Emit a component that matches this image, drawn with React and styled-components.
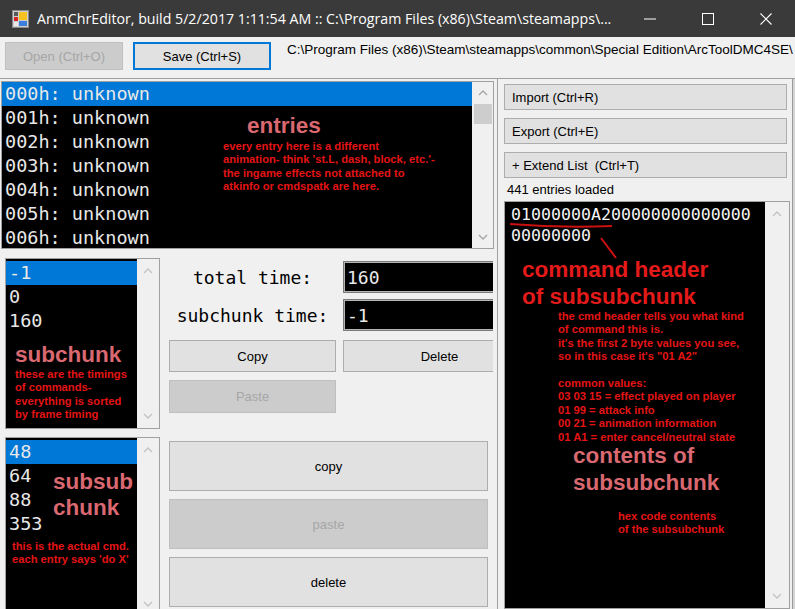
import React from 'react';
import styled, { createGlobalStyle } from 'styled-components';

const GlobalStyle = createGlobalStyle`
  * { box-sizing: border-box; }
  html, body { margin: 0; padding: 0; background: #f0f0f0; }
  body { font-family: "Liberation Sans", Arial, sans-serif; overflow: hidden; }
`;

const Window = styled.div`
  width: 795px;
  height: 609px;
  display: flex;
  flex-direction: column;
  overflow: hidden;
  background: #f0f0f0;
`;

const TitleBar = styled.div`
  height: 37px;
  flex: none;
  display: flex;
  align-items: center;
  padding-left: 12px;
  background: #3a3a3a;
  color: #ffffff;
`;

const TitleText = styled.div`
  flex: 1;
  margin-left: 8px;
  font-family: "Open Sans", "Noto Sans", sans-serif;
  font-size: 14.2px;
  white-space: nowrap;
  overflow: hidden;
`;

const CaptionButton = styled.div`
  width: 58px;
  height: 37px;
  display: flex;
  align-items: center;
  justify-content: center;
`;

const Toolbar = styled.div`
  height: 41px;
  flex: none;
  display: flex;
  align-items: flex-start;
  gap: 10px;
  padding: 5px 0 0 5px;
  overflow: hidden;
`;

const Button = styled.button`
  flex: none;
  width: ${p => p.$w}px;
  height: ${p => p.$h}px;
  padding: 0 0 0 ${p => (p.$left ? 7 : 0)}px;
  text-align: ${p => (p.$left ? 'left' : 'center')};
  white-space: pre;
  font-family: "Liberation Sans", Arial, sans-serif;
  font-size: 13px;
  color: #000;
  background: #e1e1e1;
  border: ${p => (p.$focused ? '2px solid #0078d7' : '1px solid #adadad')};
  border-radius: 0;

  &:disabled {
    background: #cccccc;
    border-color: #bfbfbf;
    color: #a6a6a6;
  }
`;

const PathLabel = styled.div`
  flex: none;
  margin-left: 6px;
  font-size: 13.5px;
  line-height: 16px;
  white-space: nowrap;
  color: #000;
`;

const Main = styled.div`
  flex: 1;
  min-height: 0;
  display: flex;
  border-top: 1px solid #a0a0a0;
  background: #d4d4d4;
`;

const LeftPanel = styled.div`
  width: 498px;
  flex: none;
  display: flex;
  flex-direction: column;
  padding-top: 2px;
  border-right: 1px solid #a0a0a0;
  background: #f0f0f0;
  overflow: hidden;
`;

const ListBox = styled.div`
  flex: none;
  display: flex;
  width: ${p => p.$w}px;
  height: ${p => p.$h}px;
  margin-left: ${p => p.$ml || 0}px;
  border: 1px solid #a0a0a0;
  background: #f0f0f0;
`;

const ListArea = styled.div`
  position: relative;
  flex: 1;
  overflow: hidden;
  background: #000;
  padding-top: ${p => p.$pt || 0}px;
`;

const ListItem = styled.div`
  height: 24px;
  line-height: 24px;
  padding-left: 3px;
  font-family: "DejaVu Sans Mono", "Liberation Mono", monospace;
  font-size: 18.5px;
  white-space: pre;
  color: #e8e8e8;
  background: ${p => (p.$selected ? '#0078d7' : 'transparent')};
`;

const ScrollBar = styled.div`
  flex: none;
  width: ${p => p.$w}px;
  display: flex;
  flex-direction: column;
  align-items: center;
  background: #f0f0f0;
`;

const ArrowCell = styled.div`
  height: ${p => p.$h || 24}px;
  width: 100%;
  display: flex;
  align-items: center;
  justify-content: center;
`;

const Thumb = styled.div`
  width: 18px;
  height: 20px;
  background: #cdcdcd;
`;

const Spacer = styled.div`
  flex: 1;
`;

const LowerGrid = styled.div`
  width: 493px;
  margin-top: 9px;
  padding-left: 5px;
  display: grid;
  grid-template-columns: 155px 1fr;
  grid-template-rows: 171px 180px;
  column-gap: 9px;
  row-gap: 8px;
  overflow: hidden;
`;

const Controls = styled.div`
  padding-top: 3px;
  display: flex;
  flex-direction: column;
`;

const FieldGrid = styled.div`
  display: grid;
  grid-template-columns: 167px 193px;
  grid-auto-rows: 32px;
  column-gap: 7px;
  row-gap: 6px;
`;

const FieldLabel = styled.div`
  display: flex;
  align-items: center;
  justify-content: center;
  font-family: "DejaVu Sans Mono", "Liberation Mono", monospace;
  font-size: 18px;
  white-space: pre;
  color: #000;
`;

const FieldInput = styled.div`
  display: flex;
  align-items: center;
  padding-left: 3px;
  background: #000;
  border: 1px solid #7a7a7a;
  box-shadow: inset 0 0 0 1px #b4b4b4;
  font-family: "DejaVu Sans Mono", "Liberation Mono", monospace;
  font-size: 18px;
  color: #e8e8e8;
`;

const ButtonGrid = styled.div`
  margin-top: 9px;
  display: grid;
  grid-template-columns: 167px 193px;
  grid-template-rows: 32px 33px;
  column-gap: 7px;
  row-gap: 8px;
`;

const BigButtons = styled.div`
  padding-top: 4px;
  display: flex;
  flex-direction: column;
  gap: 8px;
`;

const RightPanel = styled.div`
  width: 295px;
  flex: none;
  display: flex;
  flex-direction: column;
  padding: 5px 0 0 6px;
  border-right: 1px solid #9a9a9a;
  background: #f0f0f0;
`;

const ButtonStack = styled.div`
  display: flex;
  flex-direction: column;
  gap: 8px;
`;

const Status = styled.div`
  height: 23px;
  line-height: 23px;
  padding-left: 3px;
  font-size: 13px;
  color: #000;
`;

const HexBox = styled.div`
  flex: 1;
  width: 286px;
  display: flex;
  border: 1px solid #a0a0a0;
  background: #f0f0f0;
`;

const HexText = styled.div`
  padding: 2px 0 0 6px;
  font-family: "DejaVu Sans Mono", "Liberation Mono", monospace;
  font-size: 16.6px;
  line-height: 21px;
  color: #f4f4f4;
  white-space: pre;
`;

const Marks = styled.svg`
  position: absolute;
  left: 0;
  top: 0;
`;

const Note = styled.div`
  position: absolute;
  left: ${p => p.$x}px;
  top: ${p => p.$y}px;
  font-family: "Liberation Sans", Arial, sans-serif;
  font-weight: bold;
  white-space: pre;
  pointer-events: none;
`;

const NoteTitle = styled.div`
  font-size: 22.5px;
  line-height: ${p => p.$lh || 27}px;
  color: ${p => (p.$red ? '#e41a1a' : '#da6870')};
`;

const NoteText = styled.div`
  margin-left: ${p => p.$indent || 0}px;
  font-size: 11.2px;
  line-height: 13.4px;
  min-height: 13.4px;
  color: #e41414;
`;

const Chevron = ({ down, color = '#a6a6a6' }) => (
  <svg width="10" height="6" viewBox="0 0 10 6">
    <polyline
      points={down ? '1,1 5,5 9,1' : '1,5 5,1 9,5'}
      fill="none"
      stroke={color}
      strokeWidth="1.4"
    />
  </svg>
);

const AppIcon = () => (
  <svg width="17" height="18" viewBox="0 0 17 18">
    <rect x="0.5" y="0.5" width="16" height="17" fill="#cfcfcf" stroke="#8a8a8a" />
    <rect x="2" y="2" width="4" height="4" fill="#5a5a5a" />
    <rect x="2" y="7" width="4" height="4" fill="#d42424" />
    <rect x="2" y="12" width="4" height="4" fill="#eaeaea" />
    <rect x="7" y="2" width="8" height="8" fill="#f5c21f" />
    <rect x="7" y="11" width="8" height="5" fill="#3c7fdc" />
  </svg>
);

const entries = ['000h', '001h', '002h', '003h', '004h', '005h', '006h', '007h'];

export default function App() {
  return (
    <>
      <GlobalStyle />
      <Window>
        <TitleBar>
          <AppIcon />
          <TitleText>AnmChrEditor, build 5/2/2017 1:11:54 AM :: C:\Program Files (x86)\Steam\steamapps\...</TitleText>
          <CaptionButton>
            <svg width="12" height="2" viewBox="0 0 12 2"><rect width="12" height="1" y="0.5" fill="#fff" /></svg>
          </CaptionButton>
          <CaptionButton>
            <svg width="12" height="12" viewBox="0 0 12 12"><rect x="0.5" y="0.5" width="11" height="11" fill="none" stroke="#fff" /></svg>
          </CaptionButton>
          <CaptionButton>
            <svg width="12" height="12" viewBox="0 0 12 12"><path d="M0.5 0.5 L11.5 11.5 M11.5 0.5 L0.5 11.5" stroke="#fff" strokeWidth="1.1" /></svg>
          </CaptionButton>
        </TitleBar>

        <Toolbar>
          <Button $w={118} $h={28} disabled>Open (Ctrl+O)</Button>
          <Button $w={138} $h={28} $focused>Save (Ctrl+S)</Button>
          <PathLabel>C:\Program Files (x86)\Steam\steamapps\common\Special Edition\ArcToolDMC4SE\</PathLabel>
        </Toolbar>

        <Main>
          <LeftPanel>
            <ListBox $w={493} $h={168} $ml={1}>
              <ListArea>
                {entries.map((e, i) => (
                  <ListItem key={e} $selected={i === 0}>{e}: unknown</ListItem>
                ))}
                <Note $x={245} $y={30}>
                  <NoteTitle>entries</NoteTitle>
                </Note>
                <Note $x={221} $y={58}>
                  <NoteText>every entry here is a different</NoteText>
                  <NoteText>animation- think 'st.L, dash, block, etc.'-</NoteText>
                  <NoteText>the ingame effects not attached to</NoteText>
                  <NoteText>atkinfo or cmdspatk are here.</NoteText>
                </Note>
              </ListArea>
              <ScrollBar $w={21}>
                <ArrowCell $h={22}><Chevron /></ArrowCell>
                <Thumb />
                <Spacer />
                <ArrowCell $h={22}><Chevron down /></ArrowCell>
              </ScrollBar>
            </ListBox>

            <LowerGrid>
              <ListBox $w={155} $h={171}>
                <ListArea $pt={2}>
                  <ListItem $selected>-1</ListItem>
                  <ListItem>0</ListItem>
                  <ListItem>160</ListItem>
                  <Note $x={9} $y={82}>
                    <NoteTitle>subchunk</NoteTitle>
                    <NoteText>these are the timings</NoteText>
                    <NoteText>of commands-</NoteText>
                    <NoteText>everything is sorted</NoteText>
                    <NoteText>by frame timing</NoteText>
                  </Note>
                </ListArea>
                <ScrollBar $w={22}>
                  <ArrowCell><Chevron color="#c4c4c4" /></ArrowCell>
                  <Spacer />
                  <ArrowCell><Chevron down color="#c4c4c4" /></ArrowCell>
                </ScrollBar>
              </ListBox>

              <Controls>
                <FieldGrid>
                  <FieldLabel>total time:</FieldLabel>
                  <FieldInput>160</FieldInput>
                  <FieldLabel>subchunk time:</FieldLabel>
                  <FieldInput>-1</FieldInput>
                </FieldGrid>
                <ButtonGrid>
                  <Button $w={167} $h={32}>Copy</Button>
                  <Button $w={193} $h={32}>Delete</Button>
                  <Button $w={167} $h={33} disabled>Paste</Button>
                </ButtonGrid>
              </Controls>

              <ListBox $w={155} $h={180}>
                <ListArea $pt={2}>
                  <ListItem $selected>48</ListItem>
                  <ListItem>64</ListItem>
                  <ListItem>88</ListItem>
                  <ListItem>353</ListItem>
                  <Note $x={47} $y={31}>
                    <NoteTitle $lh={26}>subsub</NoteTitle>
                    <NoteTitle $lh={26}>chunk</NoteTitle>
                  </Note>
                  <Note $x={6} $y={102}>
                    <NoteText>this is the actual cmd.</NoteText>
                    <NoteText>each entry says 'do X'</NoteText>
                  </Note>
                </ListArea>
                <ScrollBar $w={22}>
                  <ArrowCell><Chevron color="#c4c4c4" /></ArrowCell>
                  <Spacer />
                  <ArrowCell><Chevron down color="#c4c4c4" /></ArrowCell>
                </ScrollBar>
              </ListBox>

              <BigButtons>
                <Button $w={319} $h={50}>copy</Button>
                <Button $w={319} $h={50} disabled>paste</Button>
                <Button $w={319} $h={50}>delete</Button>
              </BigButtons>
            </LowerGrid>
          </LeftPanel>

          <RightPanel>
            <ButtonStack>
              <Button $w={283} $h={26} $left>Import (Ctrl+R)</Button>
              <Button $w={283} $h={26} $left>Export (Ctrl+E)</Button>
              <Button $w={283} $h={26} $left>+ Extend List  (Ctrl+T)</Button>
            </ButtonStack>
            <Status>441 entries loaded</Status>
            <HexBox>
              <ListArea>
                <HexText>{'01000000A200000000000000\n00000000'}</HexText>
                <Marks width="260" height="70" viewBox="0 0 260 70">
                  <path d="M5 22 Q 55 26 107 24" fill="none" stroke="#cc1010" strokeWidth="2" />
                  <path d="M96 36 L111 56" fill="none" stroke="#cc1010" strokeWidth="2" />
                </Marks>
                <Note $x={17} $y={54}>
                  <NoteTitle $red>command header</NoteTitle>
                  <NoteTitle $red>of subsubchunk</NoteTitle>
                  <NoteText $indent={36}>the cmd header tells you what kind</NoteText>
                  <NoteText $indent={36}>of command this is.</NoteText>
                  <NoteText $indent={36}>it's the first 2 byte values you see,</NoteText>
                  <NoteText $indent={36}>so in this case it's "01 A2"</NoteText>
                  <NoteText $indent={36}> </NoteText>
                  <NoteText $indent={36}>common values:</NoteText>
                  <NoteText $indent={36}>03 03 15 = effect played on player</NoteText>
                  <NoteText $indent={36}>01 99 = attack info</NoteText>
                  <NoteText $indent={36}>00 21 = animation information</NoteText>
                  <NoteText $indent={36}>01 A1 = enter cancel/neutral state</NoteText>
                </Note>
                <Note $x={68} $y={240}>
                  <NoteTitle>contents of</NoteTitle>
                  <NoteTitle>subsubchunk</NoteTitle>
                </Note>
                <Note $x={113} $y={308}>
                  <NoteText>hex code contents</NoteText>
                  <NoteText>of the subsubchunk</NoteText>
                </Note>
              </ListArea>
              <ScrollBar $w={24}>
                <ArrowCell><Chevron color="#c4c4c4" /></ArrowCell>
                <Spacer />
                <ArrowCell><Chevron down color="#c4c4c4" /></ArrowCell>
              </ScrollBar>
            </HexBox>
          </RightPanel>
        </Main>
      </Window>
    </>
  );
}
